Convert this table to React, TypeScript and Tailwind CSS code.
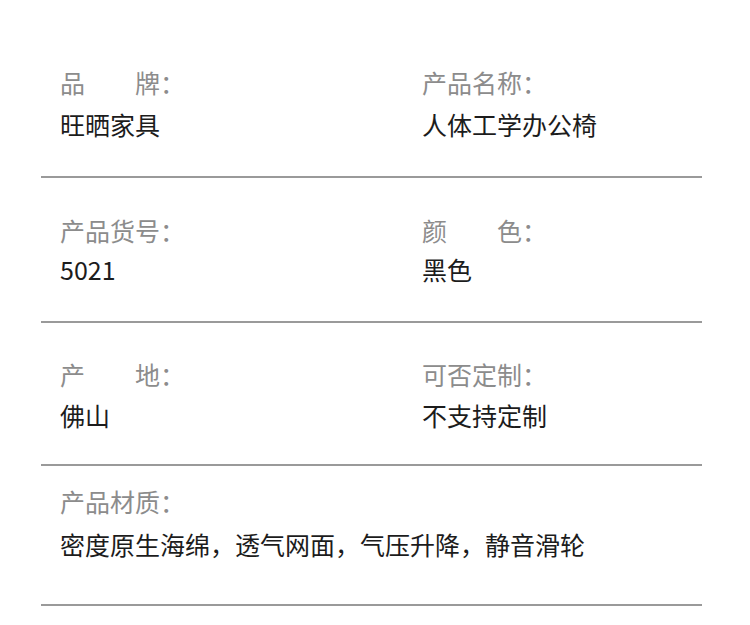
import React from "react";

const font = { fontFamily: '"Noto Sans CJK SC", "Noto Sans", sans-serif' };

function Label({ text, spread }: { text: string; spread?: boolean }) {
  if (spread) {
    const chars = text.split("");
    return (
      <div className="flex items-center text-[25px] leading-[25px] text-[#8c8c8c]">
        <div className="flex w-[100px] justify-between">
          <span>{chars[0]}</span>
          <span>{chars[1]}</span>
        </div>
        <span>：</span>
      </div>
    );
  }
  return <div className="text-[25px] leading-[25px] text-[#8c8c8c]">{text}：</div>;
}

function Value({ text }: { text: string }) {
  return <div className="text-[25px] leading-[25px] text-[#1c1c1c]">{text}</div>;
}

function Line() {
  return <div className="h-[2px] w-[661px] bg-[#9a9a9a]" />;
}

export default function App() {
  return (
    <div className="w-[750px] h-[625px] bg-white" style={font}>
      <div className="ml-[41px] w-[661px]">
        <div className="grid grid-cols-[362px_1fr] pl-[19px] pt-[70px] pb-[39px]">
          <div className="flex flex-col gap-[17px]">
            <Label text="品牌" spread />
            <Value text="旺晒家具" />
          </div>
          <div className="flex flex-col gap-[17px]">
            <Label text="产品名称" />
            <Value text="人体工学办公椅" />
          </div>
        </div>
        <Line />
        <div className="grid grid-cols-[362px_1fr] pl-[19px] pt-[40px] pb-[39px]">
          <div className="flex flex-col gap-[14px]">
            <Label text="产品货号" />
            <Value text="5021" />
          </div>
          <div className="flex flex-col gap-[14px]">
            <Label text="颜色" spread />
            <Value text="黑色" />
          </div>
        </div>
        <Line />
        <div className="grid grid-cols-[362px_1fr] pl-[19px] pt-[39px] pb-[36px]">
          <div className="flex flex-col gap-[16px]">
            <Label text="产地" spread />
            <Value text="佛山" />
          </div>
          <div className="flex flex-col gap-[16px]">
            <Label text="可否定制" />
            <Value text="不支持定制" />
          </div>
        </div>
        <Line />
        <div className="flex flex-col gap-[18px] pl-[19px] pt-[23px] pb-[47px]">
          <Label text="产品材质" />
          <Value text="密度原生海绵，透气网面，气压升降，静音滑轮" />
        </div>
        <Line />
      </div>
    </div>
  );
}
